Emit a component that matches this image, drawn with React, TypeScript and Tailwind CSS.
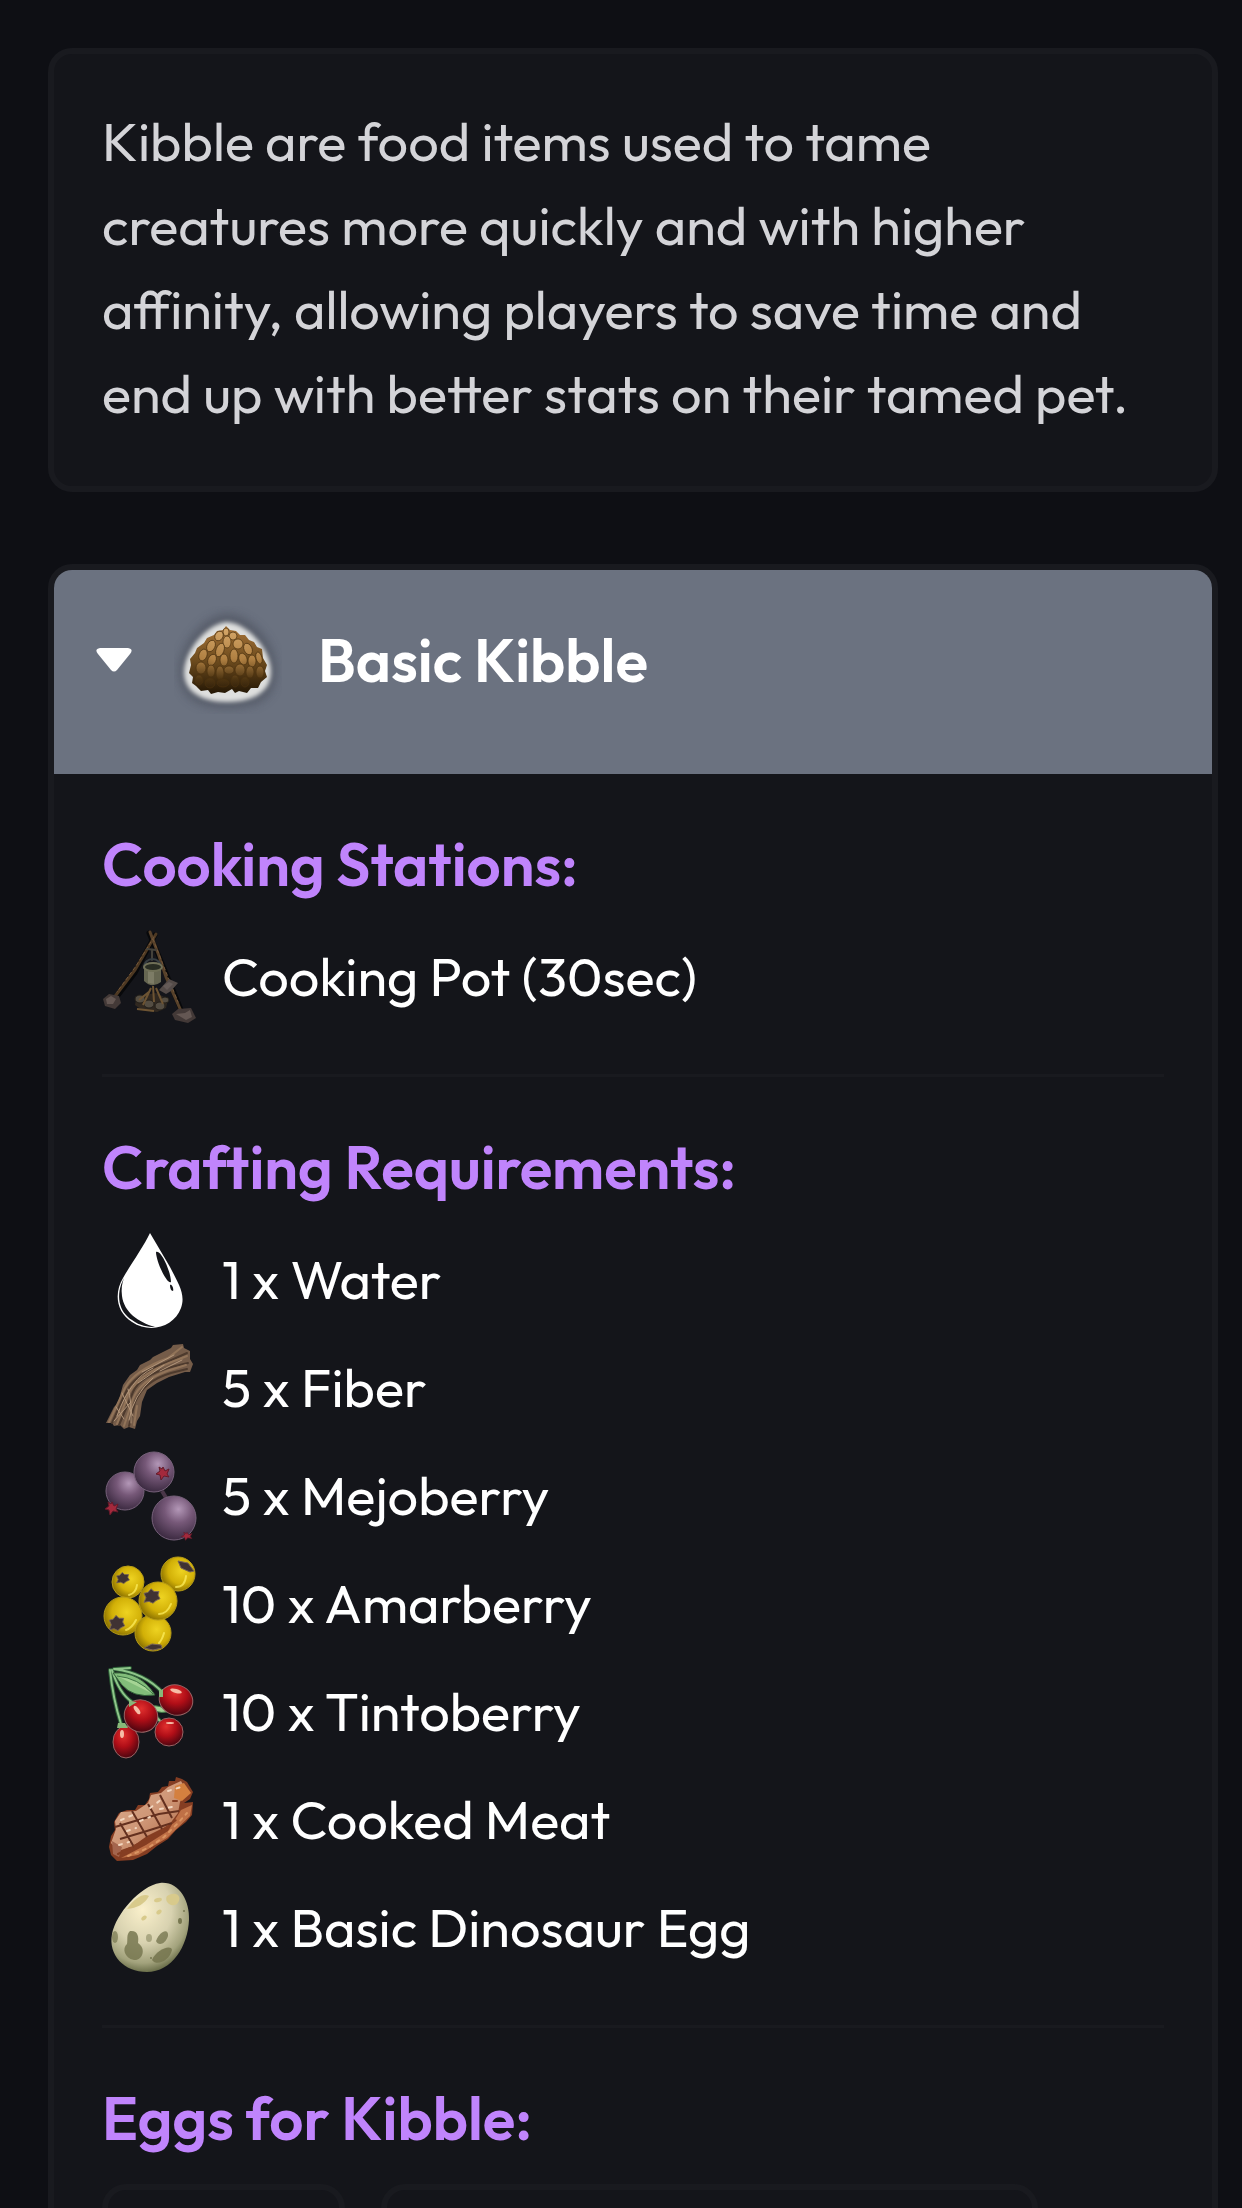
import type { ReactNode } from 'react'

const Kibble = () => (
  <svg viewBox="0 0 108 108" className="size-[108px] shrink-0" aria-hidden="true">
    <defs>
      <filter id="halo" x="-30%" y="-30%" width="160%" height="160%"><feGaussianBlur stdDeviation="2" /></filter>
      <filter id="shade" x="-30%" y="-30%" width="160%" height="160%"><feGaussianBlur stdDeviation="5" /></filter>
      <linearGradient id="seed" x1="0" y1="0" x2="0" y2="1">
        <stop offset="0" stopColor="#a87438" />
        <stop offset="0.5" stopColor="#6e4c1e" />
        <stop offset="1" stopColor="#231604" />
      </linearGradient>
      <linearGradient id="seedLight" gradientUnits="userSpaceOnUse" x1="0" y1="20" x2="0" y2="86">
        <stop offset="0" stopColor="#d8aa6c" />
        <stop offset="0.5" stopColor="#b08042" />
        <stop offset="0.8" stopColor="#4e3512" />
        <stop offset="1" stopColor="#2b1b08" />
      </linearGradient>
    </defs>
    <path d="M53 8C76 8 102 36 102 64C102 92 85 102 53 102C21 102 5 90 5 64C5 38 32 8 53 8Z" fill="#454a55" opacity=".55" filter="url(#shade)" />
    <path d="M53 16C72 17 97 42 97 66C97 84 82 96 53 96C25 96 10 84 10 66C11 42 35 17 53 16Z" fill="#dedfde" filter="url(#halo)" />
    <path d="M52 20L56 24L62 25L66 29L71 29L75 34L80 36L83 41L88 43L89 52L93 59L91 65L93 71L87 76L84 82L77 82L73 87L65 85L61 87L58 83L51 87L44 86L37 88L34 84L27 85L22 80L18 77L19 71L15 67L17 59L16 53L21 47L23 42L30 37L33 32L40 29L43 25L49 24Z" fill="url(#seed)" />
    <g fill="url(#seedLight)" stroke="#4b310f" strokeWidth=".7">
      <ellipse cx="52" cy="26" rx="3" ry="4" />
      <ellipse cx="45" cy="30" rx="4" ry="5" transform="rotate(30 45 30)" />
      <ellipse cx="59" cy="30" rx="4" ry="4" />
      <ellipse cx="53" cy="36" rx="4" ry="6" />
      <ellipse cx="64" cy="38" rx="5" ry="5" />
      <ellipse cx="37" cy="40" rx="4" ry="6" transform="rotate(25 37 40)" />
      <ellipse cx="46" cy="44" rx="4" ry="7" transform="rotate(20 46 44)" />
      <ellipse cx="74" cy="43" rx="4" ry="6" transform="rotate(-25 74 43)" />
      <ellipse cx="60" cy="50" rx="4" ry="7" />
      <ellipse cx="50" cy="54" rx="4" ry="6" />
      <ellipse cx="69" cy="53" rx="4" ry="6" transform="rotate(-20 69 53)" />
      <ellipse cx="29" cy="49" rx="4" ry="6" transform="rotate(20 29 49)" />
      <ellipse cx="38" cy="54" rx="4" ry="6" transform="rotate(25 38 54)" />
      <ellipse cx="78" cy="55" rx="4" ry="6" />
      <ellipse cx="85" cy="52" rx="3" ry="6" transform="rotate(-15 85 52)" />
      <ellipse cx="27" cy="62" rx="5" ry="6" />
      <ellipse cx="37" cy="65" rx="4" ry="6" />
      <ellipse cx="46" cy="67" rx="4" ry="7" />
      <ellipse cx="55" cy="64" rx="5" ry="4" />
      <ellipse cx="66" cy="64" rx="5" ry="6" />
      <ellipse cx="76" cy="66" rx="4" ry="6" />
      <ellipse cx="86" cy="66" rx="4" ry="6" />
      <ellipse cx="25" cy="74" rx="4" ry="5" />
      <ellipse cx="36" cy="77" rx="5" ry="5" />
      <ellipse cx="49" cy="77" rx="6" ry="4" />
      <ellipse cx="61" cy="75" rx="4" ry="6" />
      <ellipse cx="71" cy="76" rx="4" ry="5" />
    </g>
  </svg>
)

const Icon = ({ children }: { children: ReactNode }) => (
  <svg viewBox="0 -2 96 96" className="size-24 shrink-0 overflow-visible" aria-hidden="true">{children}</svg>
)

const CookingPot = () => (
  <Icon>
    <g transform="translate(0 -8)">
      <g strokeLinecap="round" fill="none">
        <path d="M53 13L33 51L11 80M47 11L59 39L80 90" stroke="#07080a" strokeWidth="5" />
        <path d="M54 12L47 24L33 48L11 77" stroke="#4d3822" strokeWidth="3" />
        <path d="M48 10L57 34L64 55L79 89" stroke="#57412a" strokeWidth="3" />
        <path d="M52 15L34 44L15 70M51 17L62 45L76 80" stroke="#74573a" strokeWidth="1" strokeDasharray="3 3" />
        <path d="M45 27L54 28M50 28V38" stroke="#44413a" strokeWidth="2" />
        <path d="M42 46C42 34 59 34 59 46" stroke="#373e42" strokeWidth="2" />
      </g>
      <path d="M57 68L67 57L76 61L69 69L64 72Z" fill="#544b48" />
      <path d="M61 64L67 60L71 62L65 68Z" fill="#655b58" />
      <path d="M42 45V59Q50 67 59 60V45Z" fill="#666651" />
      <path d="M46 49V61L52 62V48Z" fill="#7d7c66" />
      <ellipse cx="51" cy="45" rx="9" ry="4" fill="#292d23" stroke="#707057" strokeWidth="2" />
      <path d="M1 77L7 72L17 74L19 81L13 87L3 84Z" fill="#433937" />
      <path d="M4 77L9 74L14 77L11 82L5 82Z" fill="#645753" />
      <path d="M70 92L76 87L89 86L94 96L86 101L73 98Z" fill="#433937" />
      <path d="M74 92L83 91L88 88L90 95L84 98Z" fill="#645753" />
      <path d="M34 78L42 73L54 71L66 77L64 86L55 90L40 88L33 83Z" fill="#302820" />
      <g fill="#544d42" stroke="#242019" strokeWidth="1">
        <ellipse cx="38" cy="77" rx="5" ry="4" /><ellipse cx="47" cy="82" rx="5" ry="4" />
        <ellipse cx="58" cy="84" rx="5" ry="4" /><ellipse cx="63" cy="78" rx="4" ry="3" />
      </g>
      <path d="M49 66L41 83M51 64L52 80M54 66L61 82M48 69L37 78M35 87L52 89" stroke="#6d5433" strokeWidth="2" fill="none" />
    </g>
  </Icon>
)

const Water = () => (
  <Icon>
    <path d="M48 0C42 13 29 31 21 45C12 60 14 79 30 89C48 101 72 94 79 75C84 61 76 50 68 34Z" fill="#fff" />
    <path d="M22 45C13 62 17 79 30 87C38 93 46 94 53 94C36 89 22 79 20 63C19 56 20 50 22 45Z" fill="#14151a" />
    <path d="M54 19C59 16 69 39 69 49C65 52 54 28 54 19ZM68 52C70 51 72 56 71 58C69 58 68 55 68 52Z" fill="#14151a" />
  </Icon>
)

const Fiber = () => (
  <Icon>
    <path d="M4 82L12 66L16 62L21 44L28 34L35 29L38 24L48 19L51 16L61 11L69 7L71 4L81 3L82 7L88 10L88 18L91 23L88 31L83 31L67 36L55 42L45 49L40 61L38 75L35 80L33 88L27 86L22 88L18 84L12 85L10 82Z" fill="#755c49" />
    <g fill="none" strokeLinecap="round">
      <path d="M10 82L23 53Q31 34 65 21L85 12M17 84L31 51Q38 35 69 26L86 22M27 85L33 61Q42 40 69 32L85 28" stroke="#4d3a2d" strokeWidth="2" />
      <path d="M7 81L23 47Q33 29 66 17L80 6M15 83L27 52Q37 34 67 22L85 15M22 85L31 58Q38 40 65 30L84 24M32 84L35 65" stroke="#927459" strokeWidth="2" />
      <path d="M15 75Q28 38 51 27M27 79Q31 54 51 37M40 31L72 14M58 30L80 19M20 52L31 75M14 66L22 78M12 80L28 62M36 42L62 24M26 48Q30 60 29 82" stroke="#b4977b" strokeWidth="1" />
    </g>
  </Icon>
)

const crown = 'M0-6L2-2L6-4L4 1L6 4L1 3L-2 7L-3 2L-7 1L-3-2L-4-6L-1-4Z'
const calyx = 'M-1-8L2-5L7-5L6-1L8 3L4 5L1 8L-3 6L-8 7L-6 2L-8-3L-4-4Z'

const Mejoberry = () => (
  <Icon>
    <defs>
      <radialGradient id="mejo" cx=".6" cy=".3" r=".7">
        <stop offset="0" stopColor="#b397b7" /><stop offset=".45" stopColor="#765878" /><stop offset="1" stopColor="#3e2c43" />
      </radialGradient>
    </defs>
    <path d="M60 42L66 52" stroke="#4a3748" strokeWidth="4" />
    <g fill="url(#mejo)" stroke="#77617b" strokeWidth="1">
      <circle cx="23" cy="42" r="19" /><circle cx="52" cy="23" r="20" /><circle cx="72" cy="69" r="22" />
    </g>
    <g fill="#a3293c" stroke="#641a2a" strokeWidth="1">
      <path d={crown} transform="translate(61 24)" /><path d={crown} transform="translate(10 59)" /><path d={crown} transform="translate(85 87) scale(.8 .6)" />
    </g>
  </Icon>
)

const Amarberry = () => (
  <Icon>
    <defs>
      <radialGradient id="amar" cx=".6" cy=".4" r=".65">
        <stop offset="0" stopColor="#eed321" /><stop offset=".6" stopColor="#d2b007" /><stop offset="1" stopColor="#866d00" />
      </radialGradient>
    </defs>
    <g transform="translate(0 1)">
      <g fill="url(#amar)" stroke="#b79c17" strokeWidth="1">
        <circle cx="26" cy="24" r="16" /><circle cx="76" cy="16" r="17" /><circle cx="21" cy="58" r="19" />
        <circle cx="51" cy="75" r="18" /><circle cx="56" cy="43" r="19" />
      </g>
      <g fill="none" stroke="#fff162" strokeWidth="2" strokeLinecap="round" opacity=".7">
        <path d="M35 27Q34 35 27 37M84 18Q83 29 74 29M69 46Q65 56 57 56M34 62Q30 70 24 72M62 75Q60 82 57 85" />
      </g>
      <g fill="#3f3233" stroke="#786457" strokeWidth="1">
        <path d={calyx} transform="translate(21 20) scale(.8 .7)" /><path d={calyx} transform="translate(50 38) scale(1 .9)" />
        <path d={calyx} transform="translate(15 65) scale(.95)" /><path d="M76 3L86 5L92 13L88 14L79 10Z" /><path d="M42 90L50 86L59 87L60 90L51 92Z" />
      </g>
    </g>
  </Icon>
)

const Tintoberry = () => (
  <Icon>
    <defs>
      <radialGradient id="tinto" cx=".4" cy=".3" r=".7">
        <stop offset="0" stopColor="#e2302e" /><stop offset=".5" stopColor="#b00e17" /><stop offset="1" stopColor="#4f0510" />
      </radialGradient>
    </defs>
    <g transform="translate(0 -2)">
      <g fill="none" strokeLinecap="round">
        <path d="M8 7Q11 36 19 61M10 7Q17 30 30 39M12 6Q43 10 61 30M13 6L28 5M45 44L59 59" stroke="#2c5d36" strokeWidth="4" />
        <path d="M8 7Q11 36 19 61M10 7Q17 30 30 39M12 6Q43 10 61 30M13 6L28 5M45 44L59 59" stroke="#8fc68a" strokeWidth="2" />
      </g>
      <path d="M11 10Q38 8 53 32Q31 35 20 22Z" fill="#82bd7a" stroke="#315f38" strokeWidth="1" />
      <path d="M15 13Q36 15 51 31M45 43Q61 41 65 49Q54 51 45 43Z" fill="#a4d494" stroke="#3c7543" strokeWidth="1" />
      <g fill="url(#tinto)" stroke="#9a6464" strokeWidth="1">
        <ellipse cx="74" cy="37" rx="17" ry="15" transform="rotate(20 74 37)" />
        <ellipse cx="67" cy="69" rx="14" ry="14" />
        <ellipse cx="24" cy="79" rx="13" ry="16" />
        <ellipse cx="39" cy="53" rx="17" ry="16" transform="rotate(30 39 53)" />
      </g>
      <g fill="#f6bda7">
        <ellipse cx="35" cy="47" rx="2" ry="5" transform="rotate(-35 35 47)" /><ellipse cx="74" cy="28" rx="6" ry="2" transform="rotate(15 74 28)" />
        <ellipse cx="20" cy="71" rx="2" ry="4" /><ellipse cx="68" cy="60" rx="4" ry="1" />
      </g>
      <path d="M16 60L23 60L26 65L15 65ZM27 38L35 39L27 44ZM57 28L61 26L61 34L57 34Z" fill="#87b879" />
    </g>
  </Icon>
)

const CookedMeat = () => (
  <Icon>
    <defs>
      <linearGradient id="meat" x1="0" y1="0" x2="1" y2="1">
        <stop offset="0" stopColor="#dcae90" /><stop offset=".5" stopColor="#cf9777" /><stop offset="1" stopColor="#aa6240" />
      </linearGradient>
    </defs>
    <g transform="translate(0 4)">
      <path d="M7 70L9 59L13 53L12 45L17 36L25 33L33 33L36 28L43 28L47 22L48 16L56 15L60 10L66 9L67 4L73 4L74 0L80 2L85 5L91 15L88 22L82 26L91 25L90 38L84 45L74 53L66 62L55 69L45 77L31 83L15 84L9 78Z" fill="#853d22" />
      <path d="M9 66L14 52L13 44L19 35L34 34L46 26L49 18L59 16L66 10L79 4L84 13L78 25L76 36L67 48L45 59L31 69L16 74Z" fill="url(#meat)" />
      <path d="M19 81L44 68L66 54L79 33L90 28L88 39L65 61L36 78Z" fill="#bf7046" />
      <path d="M73 9L82 6L89 16L80 24L72 21Z" fill="#d4803f" />
      <path d="M10 64L20 70L17 80L11 77Z" fill="#a4654d" />
      <g stroke="#64301f" strokeWidth="2" fill="none">
        <path d="M13 50L33 44L57 37L77 34M18 62L45 54L70 46M30 34L45 60M46 27L60 52M18 46L32 70M58 18L70 41" />
      </g>
      <g stroke="#f2d7c0" strokeWidth="2" fill="none" strokeLinecap="round" strokeDasharray="3 6">
        <path d="M19 43L31 38M25 54L34 51M38 44L48 40M48 31L60 22M66 14L79 10M58 32L70 30M17 68L27 65" />
      </g>
      <g stroke="#853d22" strokeWidth="2" fill="none" strokeLinecap="round" strokeDasharray="4 5">
        <path d="M16 77L38 66L60 54L74 43M71 24L80 24" />
      </g>
      <g stroke="#da9462" strokeWidth="2" fill="none" strokeLinecap="round" strokeDasharray="3 5">
        <path d="M26 79L46 71L62 60L76 46L85 36" />
      </g>
    </g>
  </Icon>
)

const Egg = () => (
  <Icon>
    <defs>
      <radialGradient id="egg" cx=".4" cy=".3" r=".75">
        <stop offset="0" stopColor="#faf0cb" /><stop offset=".5" stopColor="#d8d2b0" /><stop offset=".8" stopColor="#a2a27c" /><stop offset="1" stopColor="#525834" />
      </radialGradient>
    </defs>
    <path d="M58 2C77 0 88 20 87 39C86 65 70 91 45 91C22 91 6 74 10 53C14 33 38 5 58 2Z" fill="url(#egg)" />
    <g fill="#d8ca8b">
      <path d="M25 28C33 16 42 12 47 15C43 23 35 27 25 28Z" /><path d="M65 15C75 9 81 16 75 23C68 27 62 20 65 15Z" />
      <ellipse cx="56" cy="19" rx="4" ry="2" transform="rotate(-15 56 19)" /><ellipse cx="57" cy="31" rx="3" ry="2" transform="rotate(-35 57 31)" /><ellipse cx="42" cy="37" rx="3" ry="2" transform="rotate(-40 42 37)" />
    </g>
    <g fill="#777750">
      <path d="M28 50C36 49 37 56 36 62C45 68 40 80 32 79C22 77 20 67 25 63C26 58 24 54 28 50Z" opacity=".85" /><path d="M54 60C58 49 67 47 66 55C63 64 56 65 54 60Z" opacity=".8" />
      <path d="M50 79C54 69 69 63 70 69C68 79 55 86 50 79Z" opacity=".9" /><ellipse cx="13" cy="56" rx="3" ry="6" opacity=".7" /><ellipse cx="47" cy="57" rx="3" ry="4" opacity=".5" /><ellipse cx="78" cy="40" rx="2" ry="3" /><circle cx="82" cy="30" r="1" /><circle cx="49" cy="77" r="1" />
    </g>
  </Icon>
)

const REQUIREMENTS = [
  { label: '1 x Water', Art: Water },
  { label: '5 x Fiber', Art: Fiber },
  { label: '5 x Mejoberry', Art: Mejoberry },
  { label: '10 x Amarberry', Art: Amarberry },
  { label: '10 x Tintoberry', Art: Tintoberry },
  { label: '1 x Cooked Meat', Art: CookedMeat },
  { label: '1 x Basic Dinosaur Egg', Art: Egg },
]

function Section({ title, children }: { title: string; children: ReactNode }) {
  return (
    <section className="border-b-[3px] border-[#191a1f] pt-12 pb-11 last:border-b-0">
      <h3 className="mb-4 text-[60px] leading-[84px] font-semibold text-[#c084fc]">{title}</h3>
      {children}
    </section>
  )
}

function Item({ label, Art }: { label: string; Art: () => ReactNode }) {
  return (
    <li className="flex items-center gap-6 py-[6px]">
      <Art />
      <span>{label}</span>
    </li>
  )
}

export default function App() {
  return (
    <main className="h-screen overflow-hidden bg-[#0e0f14] pt-12 pr-6 pl-12 font-['Outfit','Lato',sans-serif] text-[54px] leading-[84px] text-white">
      <div className="rounded-3xl border-[6px] border-[#191a1f] bg-[#14151a] px-12 pt-[45px] pb-[51px]">
        <p className="text-[#d4d4d8]">
          Kibble are food items used to tame creatures more quickly and with higher affinity, allowing players to save time and end up with better stats on their tamed pet.
        </p>
      </div>

      <div className="mt-[72px] overflow-hidden rounded-3xl border-[6px] border-[#191a1f] bg-[#14151a]">
        <button type="button" aria-expanded="true" className="flex w-full items-center bg-[#6b7280] pt-9 pr-12 pb-[60px] pl-[42px] text-left">
          <svg viewBox="0 0 36 24" className="mr-[42px] h-6 w-9 shrink-0" aria-hidden="true">
            <path d="M4 0H32Q38 1 34 6L21 22Q18 25 15 22L2 6Q-2 1 4 0Z" fill="#fff" />
          </svg>
          <Kibble />
          <span className="ml-9 text-[60px] leading-[84px] font-semibold">Basic Kibble</span>
        </button>

        <div className="px-12">
          <Section title="Cooking Stations:">
            <ul>
              <Item label="Cooking Pot (30sec)" Art={CookingPot} />
            </ul>
          </Section>
          <Section title="Crafting Requirements:">
            <ul>
              {REQUIREMENTS.map((r) => <Item key={r.label} {...r} />)}
            </ul>
          </Section>
          <Section title="Eggs for Kibble:">
            <div className="mt-6 flex gap-9">
              <div className="h-40 w-[243px] rounded-3xl border-[6px] border-[#191a1f]" />
              <div className="h-40 w-[657px] rounded-3xl border-[6px] border-[#191a1f]" />
            </div>
          </Section>
        </div>
      </div>
    </main>
  )
}
